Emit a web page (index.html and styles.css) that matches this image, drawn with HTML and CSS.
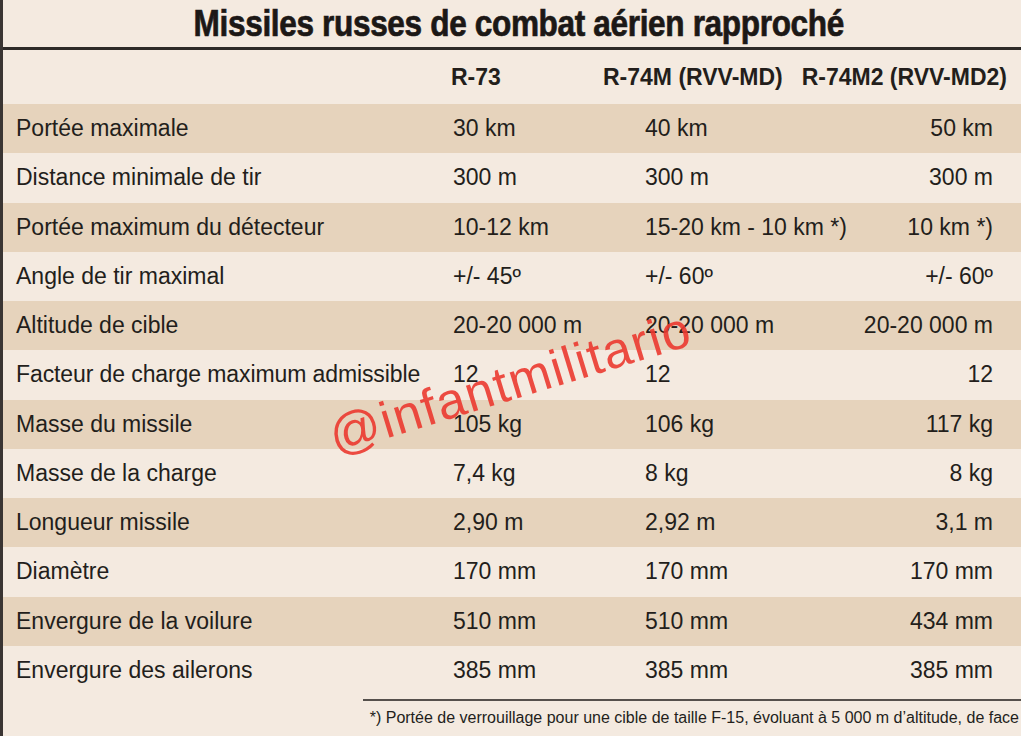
FILE: index.html
```html
<!DOCTYPE html>
<html lang="fr">
<head>
<meta charset="utf-8">
<title>Missiles russes de combat aérien rapproché</title>
<link rel="stylesheet" href="styles.css">
</head>
<body>
<div class="page">
  <div class="title"><h1>Missiles russes de combat aérien rapproché</h1></div>
  <div class="table">
    <div class="row head">
      <div class="c label"></div>
      <div class="c v1">R-73</div>
      <div class="c v2">R-74M (RVV-MD)</div>
      <div class="c v3">R-74M2 (RVV-MD2)</div>
    </div>
    <div class="row dark"><div class="c label">Portée maximale</div><div class="c v1">30 km</div><div class="c v2">40 km</div><div class="c v3">50 km</div></div>
    <div class="row"><div class="c label">Distance minimale de tir</div><div class="c v1">300 m</div><div class="c v2">300 m</div><div class="c v3">300 m</div></div>
    <div class="row dark"><div class="c label">Portée maximum du détecteur</div><div class="c v1">10-12 km</div><div class="c v2">15-20 km - 10 km *)</div><div class="c v3">10 km *)</div></div>
    <div class="row"><div class="c label">Angle de tir maximal</div><div class="c v1">+/- 45º</div><div class="c v2">+/- 60º</div><div class="c v3">+/- 60º</div></div>
    <div class="row dark"><div class="c label">Altitude de cible</div><div class="c v1">20-20 000 m</div><div class="c v2">20-20 000 m</div><div class="c v3">20-20 000 m</div></div>
    <div class="row"><div class="c label tight">Facteur de charge maximum admissible</div><div class="c v1">12</div><div class="c v2">12</div><div class="c v3">12</div></div>
    <div class="row dark"><div class="c label">Masse du missile</div><div class="c v1">105 kg</div><div class="c v2">106 kg</div><div class="c v3">117 kg</div></div>
    <div class="row"><div class="c label">Masse de la charge</div><div class="c v1">7,4 kg</div><div class="c v2">8 kg</div><div class="c v3">8 kg</div></div>
    <div class="row dark"><div class="c label">Longueur missile</div><div class="c v1">2,90 m</div><div class="c v2">2,92 m</div><div class="c v3">3,1 m</div></div>
    <div class="row"><div class="c label">Diamètre</div><div class="c v1">170 mm</div><div class="c v2">170 mm</div><div class="c v3">170 mm</div></div>
    <div class="row dark"><div class="c label">Envergure de la voilure</div><div class="c v1">510 mm</div><div class="c v2">510 mm</div><div class="c v3">434 mm</div></div>
    <div class="row"><div class="c label">Envergure des ailerons</div><div class="c v1">385 mm</div><div class="c v2">385 mm</div><div class="c v3">385 mm</div></div>
  </div>
  <div class="foot">
    <p>*) Portée de verrouillage pour une cible de taille F-15, évoluant à 5 000 m d’altitude, de face</p>
  </div>
  <div class="watermark">@infantmilitario</div>
</div>
</body>
</html>
```

FILE: styles.css
```css
html, body {
  margin: 0;
  padding: 0;
  background: #f4eae0;
}
.page {
  position: relative;
  width: 1021px;
  height: 736px;
  overflow: hidden;
  box-sizing: border-box;
  border-left: 3px solid #3a3533;
  background: #f4eae0;
  color: #231e1b;
  font-family: "Liberation Sans", Arial, sans-serif;
}
.title {
  height: 47px;
  border-bottom: 3px solid #2e2a28;
  display: flex;
  align-items: center;
  justify-content: center;
}
.title h1 {
  margin: 0 0 0 14px;
  font-size: 36px;
  line-height: 40px;
  font-weight: 700;
  letter-spacing: -0.4px;
  color: #1c1816;
  -webkit-text-stroke: 0.7px #1c1816;
  transform: scaleX(0.877);
  white-space: nowrap;
}
.table {
  display: flex;
  flex-direction: column;
}
.row {
  display: grid;
  grid-template-columns: 447px 195px 1fr 1fr;
  align-items: center;
  height: 49.25px;
  font-size: 23px;
  white-space: nowrap;
}
.row.head {
  height: 54px;
  font-weight: 700;
}
.row.dark {
  background: #e6d3bc;
}
.c.label {
  padding-left: 13px;
}
.c.label.tight {
  letter-spacing: -0.1px;
}
.v1 {
  padding-left: 3px;
}
.v3 {
  text-align: right;
  padding-right: 28px;
}
.head .v1 { padding-left: 1px; }
.head .v2 { margin-left: -42px; }
.head .v3 { padding-right: 14px; }
.foot {
  margin: 4px 0 0 360px;
  border-top: 2px solid #55504c;
}
.foot p {
  margin: 0;
  padding-top: 8px;
  font-size: 16px;
  text-align: right;
  padding-right: 2px;
}
.watermark {
  position: absolute;
  left: 332px;
  top: 412px;
  font-family: "Liberation Sans", Arial, sans-serif;
  font-size: 51px;
  line-height: 50px;
  letter-spacing: 1.5px;
  color: #ec3a30;
  opacity: 0.9;
  transform: rotate(-17deg);
  transform-origin: 0 41px;
  white-space: nowrap;
}
```
